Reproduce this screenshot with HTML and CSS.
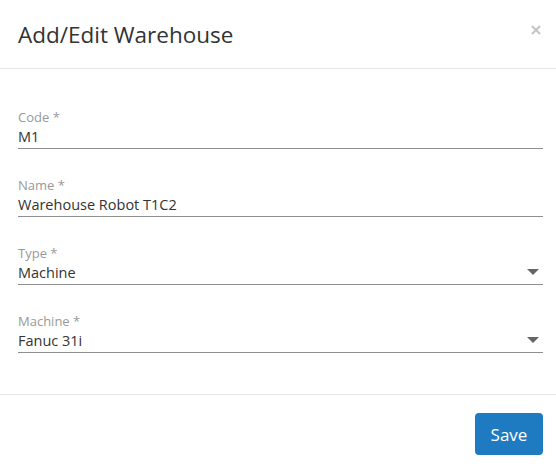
FILE: index.html
```html
<!DOCTYPE html>
<html>
<head>
<meta charset="utf-8">
<link rel="stylesheet" href="styles.css">
</head>
<body>
<div class="modal">
  <div class="modal-header">
    <h4 class="modal-title">Add/Edit Warehouse</h4>
    <button class="close" aria-label="Close">
      <svg width="10" height="10" viewBox="0 0 10 10"><path d="M1 1L9 9M9 1L1 9" stroke="#c6c6c6" stroke-width="2.2" stroke-linecap="butt"/></svg>
    </button>
  </div>
  <div class="modal-body">
    <div class="field">
      <label class="field-label">Code *</label>
      <div class="field-input">M1</div>
    </div>
    <div class="field">
      <label class="field-label">Name *</label>
      <div class="field-input">Warehouse Robot T1C2</div>
    </div>
    <div class="field">
      <label class="field-label">Type *</label>
      <div class="field-input select">Machine<span class="caret"></span></div>
    </div>
    <div class="field">
      <label class="field-label">Machine *</label>
      <div class="field-input select">Fanuc 31i<span class="caret"></span></div>
    </div>
  </div>
  <div class="modal-footer">
    <button class="btn-save">Save</button>
  </div>
</div>
</body>
</html>
```
FILE: styles.css
```css
html, body {
  margin: 0;
  padding: 0;
  background: #ffffff;
}
body {
  font-family: "Open Sans", "Liberation Sans", sans-serif;
  color: #333333;
}
.modal {
  width: 556px;
  height: 467px;
  display: flex;
  flex-direction: column;
}
.modal-header {
  display: flex;
  justify-content: space-between;
  align-items: flex-start;
  padding: 20px 15px 19px 18px;
  border-bottom: 1px solid #e5e5e5;
}
.modal-title {
  margin: 0;
  font-size: 22.5px;
  font-weight: 400;
  line-height: 29px;
  color: #333333;
}
.close {
  border: 0;
  background: none;
  padding: 0;
  margin-top: 5px;
  width: 10px;
  height: 10px;
  display: flex;
  cursor: pointer;
}
.modal-body {
  padding: 39px 13px 41px 18px;
  display: flex;
  flex-direction: column;
  gap: 27px;
}
.field {
  display: flex;
  flex-direction: column;
}
.field-label {
  font-size: 13px;
  line-height: 18px;
  color: #999999;
}
.field-input {
  position: relative;
  font-size: 14.5px;
  line-height: 22px;
  color: #333333;
  border-bottom: 1px solid #8f8f8f;
}
.caret {
  position: absolute;
  right: 4px;
  top: 7px;
  width: 0;
  height: 0;
  border-left: 6px solid transparent;
  border-right: 6px solid transparent;
  border-top: 6px solid #666666;
}
.modal-footer {
  border-top: 1px solid #e5e5e5;
  display: flex;
  justify-content: flex-end;
  padding: 18px 13px 0 18px;
}
.btn-save {
  width: 68px;
  height: 42px;
  border: 0;
  border-radius: 4px;
  background: #1f7bc1;
  color: #ffffff;
  font-family: "Open Sans", "Liberation Sans", sans-serif;
  font-size: 17px;
  padding: 0;
}
```
